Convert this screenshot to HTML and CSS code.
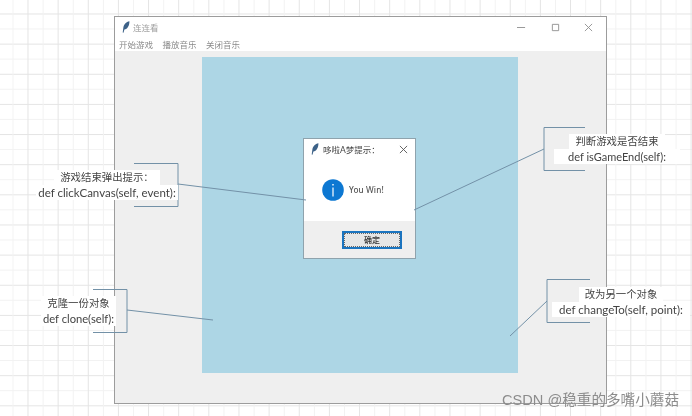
FILE: index.html
```html
<!DOCTYPE html>
<html lang="zh">
<head>
<meta charset="utf-8">
<title>连连看</title>
<link rel="stylesheet" href="styles.css">
</head>
<body>
<div class="desk">
  <section class="win">
    <header class="win-title">
      <svg class="feather" viewBox="0 0 8 12"><path d="M7.400.2C4.200.8 1.600 3.400 1.300 7L.7 11.600l.8.2.9-3.200C5.400 8.200 7.600 4.400 7.400.2z"/></svg>
      <span class="win-name">连连看</span>
      <span class="win-ctrls">
        <svg viewBox="0 0 10 10"><path d="M0 5h9"/></svg>
        <svg viewBox="0 0 10 10"><path d="M1.500 1.500h7v7h-7z"/></svg>
        <svg viewBox="0 0 10 10"><path d="M1 1l8 8M9 1l-8 8"/></svg>
      </span>
    </header>
    <nav class="menu"><span>开始游戏</span><span>播放音乐</span><span>关闭音乐</span></nav>
    <main class="stage"><div class="board"></div></main>
  </section>

  <section class="dlg">
    <header class="dlg-title">
      <svg class="feather" viewBox="0 0 8 12"><path d="M7.400.2C4.200.8 1.600 3.400 1.300 7L.7 11.600l.8.2.9-3.200C5.400 8.200 7.600 4.400 7.400.2z"/></svg>
      <span class="dlg-name">哆啦A梦提示：</span>
      <svg class="dlg-x" viewBox="0 0 10 10"><path d="M1 1l8 8M9 1l-8 8"/></svg>
    </header>
    <div class="dlg-body">
      <svg class="info" viewBox="0 0 22 22"><circle cx="11" cy="11" r="10.800"/><path d="M10.300 5h1.400v1.600h-1.400zM10.400 8.400h1.200v9h-1.200z"/></svg>
      <span class="dlg-msg">You Win!</span>
    </div>
    <footer class="dlg-foot"><button class="ok">确定</button></footer>
  </section>

  <svg class="marks" viewBox="0 0 692 416">
    <path d="M134 163.500h44v43h-44M178 184L306 200"/>
    <path d="M93 289.500h34v43H93M127 310L213 320"/>
    <path d="M585 127.500h-41v43h41M544 149L414 210"/>
    <path d="M590 279.500h-43v43h43M547 301L510 336"/>
  </svg>

  <p class="note note-a"><span class="zh">游戏结束弹出提示：</span><span class="en">def clickCanvas(self, event):</span></p>
  <p class="note note-b"><span class="zh">克隆一份对象</span><span class="en">def clone(self):</span></p>
  <p class="note note-c"><span class="zh">判断游戏是否结束</span><span class="en">def isGameEnd(self):</span></p>
  <p class="note note-d"><span class="zh">改为另一个对象</span><span class="en">def changeTo(self, point):</span></p>

  <div class="mark">CSDN @稳重的多嘴小蘑菇</div>
</div>
</body>
</html>
```
FILE: styles.css
```css
* { box-sizing: border-box; }
html, body { margin: 0; padding: 0; background: #fff; }
body { width: 692px; height: 416px; overflow: hidden; }

.desk {
  position: relative;
  width: 692px;
  height: 416px;
  overflow: hidden;
  font-family: Lato, "Noto Sans CJK SC", sans-serif;
  filter: blur(0.35px);
  background-color: #fff;
  background-image:
    linear-gradient(90deg, #e4e4e4 1px, transparent 1px),
    linear-gradient(90deg, #f2f2f2 1px, transparent 1px),
    linear-gradient(#e4e4e4 1px, transparent 1px),
    linear-gradient(#f2f2f2 1px, transparent 1px);
  background-size: 30.15px 30.15px;
  background-position: 27.500px 0, 12.500px 0, 0 13.500px, 0 28.500px;
}

.win {
  position: absolute;
  left: 114px;
  top: 16px;
  width: 493px;
  height: 388px;
  display: flex;
  flex-direction: column;
  border: 1px solid #9c9c9c;
  border-width: 1px 1.500px 1.500px 1px;
  background: #efefef;
}
.win-title {
  height: 20px;
  flex: none;
  display: flex;
  align-items: center;
  gap: 3px;
  padding-left: 7px;
  background: #fff;
}
.feather { width: 8px; height: 12px; flex: none; fill: #3d6288; }
.win-name { font-size: 8.500px; color: #a0a0a0; }
.win-ctrls {
  margin-left: auto;
  display: flex;
  gap: 24.500px;
  padding-right: 13px;
}
.win-ctrls svg { width: 9px; height: 9px; fill: none; stroke: #8e8e8e; stroke-width: 1; }

.menu {
  height: 14px;
  flex: none;
  display: flex;
  gap: 9.500px;
  padding-left: 4px;
  align-items: center;
  background: #fff;
  font-size: 8.500px;
  color: #8a8a8a;
}
.stage {
  flex: 1;
  padding: 6px 88.500px 30px 87px;
}
.board { height: 100%; background: #add6e5; }

.dlg {
  position: absolute;
  left: 303px;
  top: 138px;
  width: 113px;
  height: 121px;
  display: flex;
  flex-direction: column;
  border: 1px solid #8fa3ad;
  background: #fff;
}
.dlg-title {
  height: 20px;
  flex: none;
  display: flex;
  align-items: center;
  gap: 4px;
  padding: 0 7px 0 7px;
}
.dlg-name { font-size: 8.500px; color: #444; }
.dlg-x { width: 9px; height: 9px; margin-left: auto; fill: none; stroke: #555; stroke-width: 1; }
.dlg-body {
  flex: 1;
  display: flex;
  align-items: center;
  gap: 5px;
  padding: 0 0 1px 18px;
}
.info { width: 22px; height: 22px; flex: none; }
.info circle { fill: #0d78d2; }
.info path { fill: #fff; }
.dlg-msg {
  font: 500 8.200px "Noto Sans", sans-serif;
  color: #555;
  letter-spacing: .1px;
}
.dlg-foot {
  height: 37px;
  flex: none;
  display: flex;
  align-items: flex-start;
  justify-content: flex-end;
  padding: 10px 13px 0 0;
  background: #efefef;
}
.ok {
  width: 60px;
  height: 18px;
  padding: 0 0 2px;
  border: 2px solid #1b74bf;
  background: #e6e6e6;
  font: 500 8px "Noto Sans CJK SC", sans-serif;
  color: #333;
  outline: 1px dotted #666;
  outline-offset: -3px;
}

.marks {
  position: absolute;
  left: 0;
  top: 0;
  width: 692px;
  height: 416px;
  fill: none;
  stroke: #7391a7;
  stroke-width: 1;
}

.note {
  position: absolute;
  margin: 0;
  display: flex;
  flex-direction: column;
  align-items: center;
  line-height: 15px;
  color: #444;
}
.note span { background: #fff; white-space: nowrap; }
.zh { font-size: 10.400px; padding: 0 6px; }
.en { font-size: 11.500px; padding: 0 2px; }
.note-a { left: 36px; top: 170px; width: 142px; }
.note-b { left: 41px; top: 296px; width: 75px; }
.note-b .en { font-size: 11.200px; }
.note-c { left: 554px; top: 134px; width: 126px; }
.note-c .en { padding: 0 14px; font-size: 11px; }
.note-d { left: 552px; top: 287px; width: 138px; }
.note-d .en { padding: 0 7px; }

.mark {
  position: absolute;
  left: 502px;
  top: 391px;
  font-size: 14.600px;
  line-height: 18px;
  white-space: nowrap;
  color: #8c8c8c;
  font-family: "Liberation Sans", "Noto Sans CJK SC", sans-serif;
}
```
